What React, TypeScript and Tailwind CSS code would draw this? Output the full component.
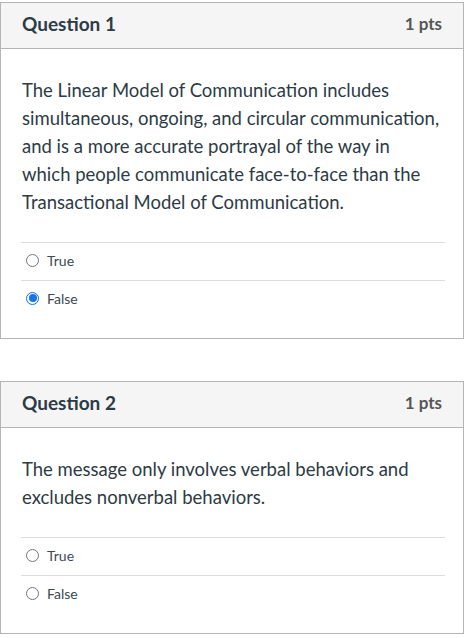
import { useState } from 'react'

type Question = {
  id: number
  title: string
  points: string
  text: string
  answer: string | null
}

const questions: Question[] = [
  {
    id: 1,
    title: 'Question 1',
    points: '1 pts',
    text: 'The Linear Model of Communication includes simultaneous, ongoing, and circular communication, and is a more accurate portrayal of the way in which people communicate face-to-face than the Transactional Model of Communication.',
    answer: 'False',
  },
  {
    id: 2,
    title: 'Question 2',
    points: '1 pts',
    text: 'The message only involves verbal behaviors and excludes nonverbal behaviors.',
    answer: null,
  },
]

function Radio({ checked }: { checked: boolean }) {
  return (
    <span
      className={`flex h-[13px] w-[13px] shrink-0 items-center justify-center rounded-full border ${
        checked ? 'border-[#0b74de]' : 'border-[#6f767c]'
      } bg-white`}
    >
      {checked && <span className="h-[8px] w-[8px] rounded-full bg-[#1a73e8]" />}
    </span>
  )
}

function QuestionCard({ q }: { q: Question }) {
  const [selected, setSelected] = useState<string | null>(q.answer)

  return (
    <div className="w-[464px] border border-[#b5b5b5] bg-white text-[#2d3b45]">
      <div className="flex h-[46px] items-center justify-between border-b border-[#b5b5b5] bg-[#f5f5f5] px-[21px] pb-[3px]">
        <span className="text-[19px] font-bold">{q.title}</span>
        <span className="text-[17px] font-bold text-[#555]">{q.points}</span>
      </div>
      <div className="px-5 pb-5 pt-[27px]">
        <p className="mr-[2px] pl-px text-[18.5px] leading-[28px]">{q.text}</p>
        <div className="mt-[26px] mr-[-2px]">
          {['True', 'False'].map((opt) => (
            <label
              key={opt}
              onClick={() => setSelected(opt)}
              className="flex h-[38px] cursor-pointer items-center gap-[8px] border-t border-[#dcdcdc] pb-[3px] pl-[5px] text-[14px] text-[#3b4a54]"
            >
              <Radio checked={selected === opt} />
              {opt}
            </label>
          ))}
        </div>
      </div>
    </div>
  )
}

export default function App() {
  return (
    <div className="min-h-screen bg-white pt-[2px] font-['Lato',sans-serif]">
      <div className="flex flex-col gap-[42px]">
        {questions.map((q) => (
          <QuestionCard key={q.id} q={q} />
        ))}
      </div>
    </div>
  )
}
